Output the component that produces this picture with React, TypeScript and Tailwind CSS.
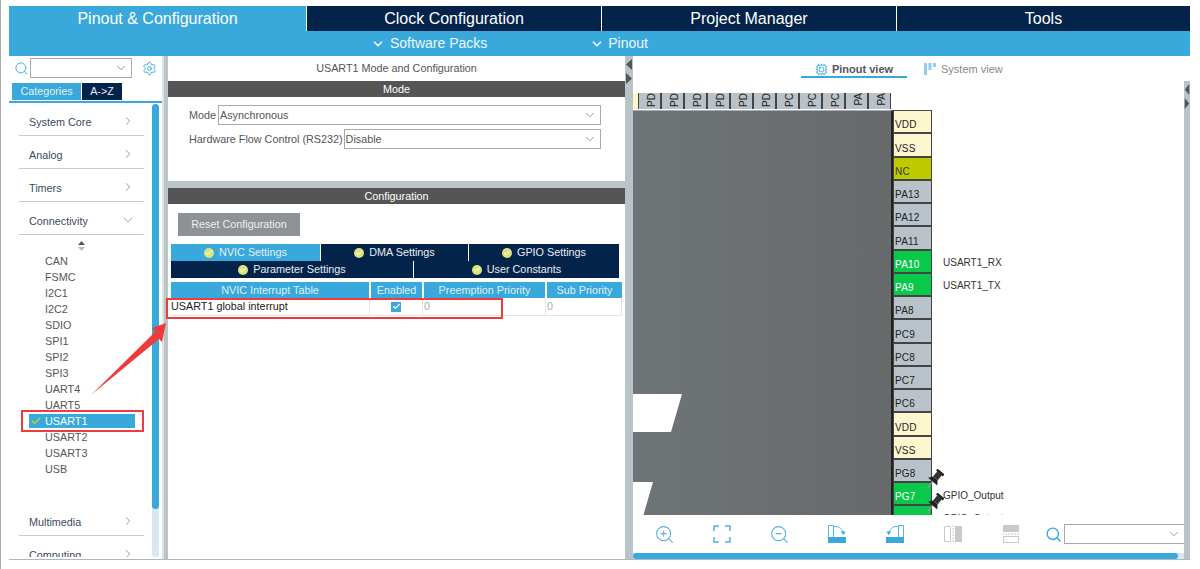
import { Check, ChevronDown, ChevronRight, Cpu, Search, Settings, ZoomIn, ZoomOut } from 'lucide-react';

const categoriesTop = ['System Core', 'Analog', 'Timers'];
const connectivity = ['CAN', 'FSMC', 'I2C1', 'I2C2', 'SDIO', 'SPI1', 'SPI2', 'SPI3', 'UART4', 'UART5', 'USART1', 'USART2', 'USART3', 'USB'];
const topPins = ['PD', 'PD', 'PD', 'PD', 'PD', 'PD', 'PC', 'PC', 'PC', 'PA', 'PA'];

const yellowPin = 'bg-[#fdf6cf] text-[#222]';
const grayPin = 'bg-[#b8c2c8] text-[#222]';
const greenPin = 'bg-[#0ac84c] text-white';

const rightPins = [
  { name: 'VDD', tone: yellowPin },
  { name: 'VSS', tone: yellowPin },
  { name: 'NC', tone: 'bg-[#bfcb00] text-[#333]' },
  { name: 'PA13', tone: grayPin },
  { name: 'PA12', tone: grayPin },
  { name: 'PA11', tone: grayPin },
  { name: 'PA10', tone: greenPin, label: 'USART1_RX' },
  { name: 'PA9', tone: greenPin, label: 'USART1_TX' },
  { name: 'PA8', tone: grayPin },
  { name: 'PC9', tone: grayPin },
  { name: 'PC8', tone: grayPin },
  { name: 'PC7', tone: grayPin },
  { name: 'PC6', tone: grayPin },
  { name: 'VDD', tone: yellowPin },
  { name: 'VSS', tone: yellowPin },
  { name: 'PG8', tone: grayPin },
  { name: 'PG7', tone: greenPin, label: 'GPIO_Output' },
  { name: 'PG6', tone: greenPin, label: 'GPIO_Output' },
];

function Category({ name, open }: { name: string; open?: boolean }) {
  return (
    <div className="mt-[4px] ml-[10px] flex h-[29px] w-[125px] items-end justify-between border-b border-[#c4cbd0] pb-[3px] pl-[10px] pr-[9px] text-[10.8px] leading-[14px] text-[#3b4a63]">
      <span className="mb-[3px]">{name}</span>
      {open ? (
        <ChevronDown size={14} strokeWidth={1} className="mb-[4px] text-[#555]" />
      ) : (
        <ChevronRight size={14} strokeWidth={1} className="mb-[4px] text-[#555]" />
      )}
    </div>
  );
}

function Select({ value }: { value: string }) {
  return (
    <div className="flex h-[20px] flex-1 items-center justify-between border border-[#a9a9a9] pl-[1px] pr-[3px] text-[10.8px] text-[#555]">
      <span>{value}</span>
      <ChevronDown size={14} strokeWidth={1} className="text-[#555]" />
    </div>
  );
}

function Dot() {
  return (
    <span className="mr-[5px] flex h-[10px] w-[10px] items-center justify-center rounded-full bg-[#dbe37c]">
      <Check size={8} strokeWidth={3} className="text-white" />
    </span>
  );
}

function SubTab({ label, active, width }: { label: string; active?: boolean; width: string }) {
  return (
    <div className={`flex h-[17px] items-center justify-center border-r border-white text-[10.8px] text-[#e6eef5] ${width} ${active ? 'bg-[#39a9dc]' : 'bg-[#03234b]'}`}>
      <Dot />
      {label}
    </div>
  );
}

function Strip({ className }: { className: string }) {
  return (
    <div className={`flex shrink-0 flex-col bg-[#b9c4c8] ${className}`}>
      <svg viewBox="0 0 8 28" preserveAspectRatio="none" className="mt-[2px] h-[28px] w-full">
        <path d="M7 1 L1 6.5 L7 12 Z" fill="#555" />
        <path d="M1 15 L7 20.5 L1 26 Z" fill="#555" />
      </svg>
    </div>
  );
}

function Pushpin({ className }: { className: string }) {
  return (
    <svg width="20" height="22" viewBox="0 0 20 22" className={`absolute ${className}`}>
      <g transform="rotate(40 10 11)">
        <rect x="5.5" y="0" width="9" height="2.5" fill="#222" />
        <rect x="7" y="2" width="6" height="7" fill="#333" />
        <path d="M4 13 H16 L13 9 H7 Z" fill="#222" />
        <path d="M10 13 V21" stroke="#9a9a9a" strokeWidth="1.2" />
      </g>
    </svg>
  );
}

function RotateIcon({ flip }: { flip?: boolean }) {
  return (
    <svg width="20" height="20" viewBox="0 0 20 20" className={flip ? '-scale-x-100' : ''} fill="none" stroke="#5ab0e0">
      <path d="M1.5 14 V1.5 H6.5 V13" />
      <rect x="1" y="13" width="18" height="6" fill="#39a9dc" stroke="none" />
      <path d="M7 2.5 C11 2 14.5 4 16 8" />
      <path d="M13.5 7.5 H18.5 L16.5 11 Z" fill="#39a9dc" stroke="none" />
    </svg>
  );
}

export default function App() {
  return (
    <div className="relative box-border h-[569px] w-[1200px] overflow-hidden border-l border-[#aaa] bg-white pl-[8px] pt-[6px] [font-family:'Liberation_Sans',Arial,sans-serif]">
      {/* top tabs */}
      <div className="w-[1181px]">
        <div className="flex h-[25px] text-[16px] text-white">
          <div className="flex w-[297px] items-center justify-center bg-[#39a9dc]">Pinout &amp; Configuration</div>
          <div className="flex w-[295px] items-center justify-center border-l border-white bg-[#03234b]">Clock Configuration</div>
          <div className="flex w-[295px] items-center justify-center border-l border-white bg-[#03234b]">Project Manager</div>
          <div className="flex w-[294px] items-center justify-center border-l border-white bg-[#03234b]">Tools</div>
        </div>
        <div className="flex h-[25px] items-center bg-[#39a9dc] pl-[362px] text-[14px] text-[#eef7fc]">
          <ChevronDown size={14} strokeWidth={3} />
          <span className="ml-[5px]">Software Packs</span>
          <ChevronDown size={14} strokeWidth={3} className="ml-[103px]" />
          <span className="ml-[4px]">Pinout</span>
        </div>
      </div>

      <div className="flex h-[504px] w-[1181px] border-b border-[#b0b8ba]">
        {/* left column */}
        <div className="flex w-[153px] shrink-0 flex-col overflow-hidden">
          <div className="mt-[2px] flex h-[20px] items-center">
            <Search size={15} strokeWidth={1.5} className="ml-[5px] text-[#39a9dc]" />
            <div className="ml-[1px] flex h-[20px] w-[102px] items-center justify-end border border-[#a9a9a9] pr-[3px]">
              <ChevronDown size={14} strokeWidth={1} className="text-[#555]" />
            </div>
            <Settings size={15} strokeWidth={1.5} className="ml-[10px] text-[#39a9dc]" />
          </div>
          <div className="mt-[5px] ml-[3px] flex h-[17px] text-[10.8px] text-[#e6eef5]">
            <div className="flex w-[69px] items-center justify-center bg-[#39a9dc]">Categories</div>
            <div className="ml-[1px] flex w-[40px] items-center justify-center bg-[#03234b]">A-&gt;Z</div>
          </div>
          <div className="mt-[1px] h-[2px] bg-[#39a9dc]" />
          <div className="flex h-[454px] overflow-hidden">
            <div className="w-[143px] shrink-0">
              {categoriesTop.map((c) => (
                <Category key={c} name={c} />
              ))}
              <Category name="Connectivity" open />
              <div className="ml-[69px] mt-[6px] h-[12px]">
                <svg width="7" height="10" viewBox="0 0 7 10">
                  <path d="M3.5 0 L7 4 H0 Z" fill="#555" />
                  <path d="M3.5 10 L7 6 H0 Z" fill="#bbb" />
                </svg>
              </div>
              <div className="text-[10.8px] leading-[16px] text-[#555]">
                {connectivity.map((item) => (
                  <div key={item} className="ml-[20px] flex h-[16px] w-[106px] items-center">
                    {item === 'USART1' ? (
                      <div className="relative flex h-[14px] w-full items-center bg-[#39a9dc] pl-[16px] text-white">
                        <Check size={12} strokeWidth={3} className="absolute left-[1px] text-[#b5d334]" />
                        {item}
                      </div>
                    ) : (
                      <span className="pl-[16px]">{item}</span>
                    )}
                  </div>
                ))}
              </div>
              <div className="h-[26px]" />
              <Category name="Multimedia" />
              <Category name="Computing" />
            </div>
            <div className="mt-[1px] h-[453px] w-[7px] shrink-0 rounded-full bg-[#d8e8f3]">
              <div className="h-[405px] rounded-full bg-[#39a9dc]" />
            </div>
          </div>
        </div>
        <div className="w-[6px] shrink-0 border-l-2 border-[#dde3e6] bg-[#b9c4c8]" />

        {/* middle column */}
        <div className="flex w-[457px] shrink-0 flex-col">
          <div className="flex h-[25px] items-center justify-center text-[10.8px] text-[#555]">USART1 Mode and Configuration</div>
          <div className="flex h-[16px] items-center justify-center bg-[#555] text-[10.8px] text-white">Mode</div>
          <div className="h-[84px] px-[21px] pr-[24px] pt-[8px] text-[10.8px] text-[#555]">
            <div className="flex items-center">
              <span className="mr-[2px]">Mode</span>
              <Select value="Asynchronous" />
            </div>
            <div className="mt-[4px] flex items-center">
              <span className="mr-[1px]">Hardware Flow Control (RS232)</span>
              <Select value="Disable" />
            </div>
          </div>
          <div className="h-[7px] bg-[#bcc6c9]" />
          <div className="flex h-[16px] items-center justify-center bg-[#555] text-[10.8px] text-white">Configuration</div>
          <div className="ml-[10px] mt-[9px] flex h-[23px] w-[122px] items-center justify-center bg-[#8e9295] text-[10.8px] text-[#eceeef]">Reset Configuration</div>
          <div className="ml-[3px] mt-[8px] flex">
            <SubTab label="NVIC Settings" active width="w-[150px]" />
            <SubTab label="DMA Settings" width="w-[148px]" />
            <SubTab label="GPIO Settings" width="w-[151px]" />
          </div>
          <div className="ml-[3px] flex">
            <SubTab label="Parameter Settings" width="w-[243px]" />
            <SubTab label="User Constants" width="w-[206px]" />
          </div>
          <div className="ml-[3px] mt-[4px] flex h-[16px] gap-[2px] text-[10.8px] text-[#dff0fa]">
            <div className="flex w-[198px] items-center justify-center bg-[#39a9dc]">NVIC Interrupt Table</div>
            <div className="flex w-[51px] items-center justify-center bg-[#39a9dc]">Enabled</div>
            <div className="flex w-[121px] items-center justify-center bg-[#39a9dc]">Preemption Priority</div>
            <div className="flex w-[75px] items-center justify-center bg-[#39a9dc]">Sub Priority</div>
          </div>
          <div className="ml-[3px] flex h-[18px] w-[451px] border-b border-[#e4e4e4] text-[10.8px]">
            <div className="flex w-[199px] items-center border-r border-[#e4e4e4] text-[#222]">USART1 global interrupt</div>
            <div className="flex w-[53px] items-center justify-center border-r border-[#e4e4e4]">
              <span className="flex h-[10px] w-[10px] items-center justify-center bg-[#39a9dc]">
                <Check size={9} strokeWidth={3} className="text-white" />
              </span>
            </div>
            <div className="flex w-[123px] items-center border-r border-[#e4e4e4] pl-[1px] text-[#aaa]">0</div>
            <div className="flex flex-1 items-center border-r border-[#e4e4e4] pl-[1px] text-[#aaa]">0</div>
          </div>
        </div>
        <Strip className="w-[8px]" />

        {/* right column */}
        <div className="flex w-[551px] shrink-0 flex-col">
          <div className="flex h-[37px] shrink-0 items-start pl-[168px] pt-[6px] text-[11px]">
            <div className="flex h-[16px] w-[106px] items-center justify-center border-b-2 border-[#39a9dc] font-bold text-[#555]">
              <Cpu size={13} strokeWidth={1.5} className="mr-[4px] text-[#39a9dc]" />
              Pinout view
            </div>
            <div className="ml-[17px] flex h-[14px] items-center text-[#888]">
              <svg width="12" height="12" viewBox="0 0 12 12" className="mr-[5px]" fill="#8ecdf0">
                <rect x="0" y="0" width="3" height="12" />
                <rect x="4.5" y="0" width="3" height="7" />
                <rect x="9" y="0" width="3" height="4" />
              </svg>
              System view
            </div>
          </div>
          <div className="relative h-[422px] shrink-0 overflow-hidden">
            <div className="flex h-[17px] w-[259px]">
              <div className="h-[16px] w-[5px] shrink-0 bg-[#fdf6cf]" />
              {topPins.map((p, i) => (
                <div key={i} className="flex h-[16px] w-[23px] shrink-0 items-start justify-end border-x border-[#444] bg-[#b8c2c8] pr-[3px] text-[10px] leading-[11px] text-[#222]">
                  <span className="rotate-180 [writing-mode:vertical-rl]">{p}</span>
                </div>
              ))}
            </div>
            <div className="flex">
              <div className="relative h-[405px] w-[260px] shrink-0 border-r-2 border-t border-r-[#222] border-t-[#aab] bg-gradient-to-r from-[#6f7476] to-[#666a6b]">
                <svg width="60" height="130" viewBox="0 0 60 130" className="absolute left-0 top-[283px]">
                  <path d="M0 0 H49 L38 38 H0 Z" fill="white" />
                  <path d="M0 88 H20 L9 126 H0 Z" fill="white" />
                </svg>
              </div>
              <div className="flex flex-col">
                {rightPins.map((pin, i) => (
                  <div key={i} className="flex h-[23.25px] shrink-0 items-center">
                    <div className={`flex h-full w-[39px] shrink-0 items-end border border-[#444] pl-[1px] text-[10px] leading-[15px] tracking-[0.2px] ${pin.tone}`}>{pin.name}</div>
                    {pin.label && <span className="ml-[11px] mt-[3px] text-[10px] text-[#333]">{pin.label}</span>}
                  </div>
                ))}
              </div>
            </div>
            <Pushpin className="left-[291px] top-[376px]" />
            <Pushpin className="left-[291px] top-[400px]" />
          </div>
          <div className="flex h-[38px] shrink-0 items-center pl-[21px]">
            <ZoomIn size={21} strokeWidth={1.2} className="text-[#5ab0e0]" />
            <svg width="20" height="20" viewBox="0 0 20 20" fill="none" stroke="#5ab0e0" strokeWidth="1.5" className="ml-[37px]">
              <path d="M2 7 V2 H7 M13 2 H18 V7 M18 13 V18 H13 M7 18 H2 V13" />
            </svg>
            <ZoomOut size={21} strokeWidth={1.2} className="ml-[37px] text-[#5ab0e0]" />
            <div className="ml-[37px]"><RotateIcon /></div>
            <div className="ml-[38px]"><RotateIcon flip /></div>
            <svg width="20" height="20" viewBox="0 0 20 20" fill="#c9c9c9" className="ml-[38px]">
              <path d="M1.5 2.5 H7.5 V17.5 H1.5 Z" fill="none" stroke="#c9c9c9" />
              <path d="M10 1 V19" stroke="#c9c9c9" strokeDasharray="2 1" />
              <rect x="12" y="2" width="7" height="16" />
            </svg>
            <svg width="20" height="20" viewBox="0 0 20 20" fill="#c9c9c9" className="ml-[38px]">
              <rect x="2" y="1" width="16" height="7" />
              <path d="M1 10 H19" stroke="#c9c9c9" strokeDasharray="2 1" />
              <rect x="2.5" y="12.5" width="15" height="6" fill="none" stroke="#c9c9c9" />
            </svg>
            <Search size={17} strokeWidth={2} className="ml-[24px] text-[#39a9dc]" />
            <div className="ml-[2px] flex h-[20px] flex-1 items-center justify-end border border-r-0 border-[#a9a9a9] pr-[3px]">
              <ChevronDown size={14} strokeWidth={1} className="text-[#555]" />
            </div>
          </div>
          <div className="flex h-[6px] shrink-0 bg-[#d8e8f3]">
            <div className="w-[545px] rounded-full bg-[#39a9dc]" />
          </div>
        </div>
        <Strip className="mt-[25px] w-[6px]" />
      </div>

      {/* red annotations from the screenshot */}
      <div className="absolute left-[20px] top-[410px] h-[22px] w-[123px] border-2 border-[#ee3b3b]" />
      <div className="absolute left-[165px] top-[298px] h-[21px] w-[337px] border-2 border-[#ee3b3b]" />
      <svg width="90" height="85" viewBox="0 0 90 85" className="absolute left-[85px] top-[318px]">
        <path d="M80 5 L66 10 L69 14 L5 77 L73 21 L76 24 Z" fill="#ee3b3b" />
      </svg>
    </div>
  );
}
